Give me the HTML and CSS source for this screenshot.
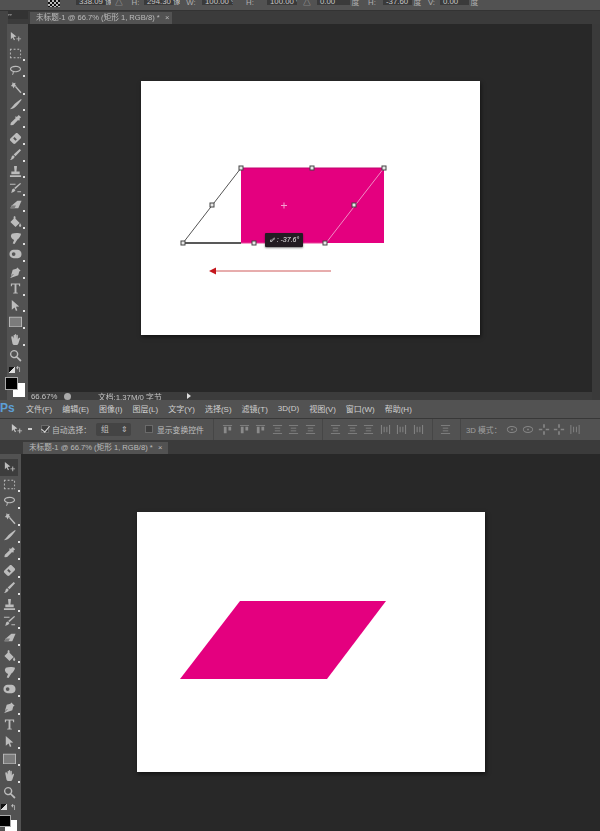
FILE: index.html
```html
<!DOCTYPE html>
<html lang="zh-CN">
<head>
  <meta charset="UTF-8">
  <title>Photoshop 斜切</title>
  <link rel="stylesheet" href="styles.css">
</head>
<body>
  <!-- 图标 -->
  <svg class="defs" width="0" height="0">
    <symbol id="i-move" viewBox="0 0 14 14"><path d="M2 1l6 5-3 .4 1.5 3-1.2.6L3.800 7 2 9z"/><path d="M10 6h1v2h2v1h-2v2h-1V9H8V8h2z"/></symbol>
    <symbol id="i-marquee" viewBox="0 0 14 14"><path d="M1 2h2v1H2v1H1zM5 2h2v1H5zM9 2h2v1H9zM12 3h1v2h-1zM12 7h1v2h-1zM1 6h1v2H1zM1 10h1v1h1v1H1zM5 11h2v1H5zM9 11h2v1H9zM12 11h1v1h-1z"/></symbol>
    <symbol id="i-lasso" viewBox="0 0 14 14"><path d="M7 2c3.500 0 6 1.400 6 3.400S10 9 7 9c-.7 0-1.400-.1-2-.2.300.8-.1 2-.9 3l-.8-.5c.5-.7.8-1.400.7-2.900C2 7.800 1 6.800 1 5.500 1 3.400 3.500 2 7 2zm0 1.300c-2.500 0-4.700.9-4.700 2.200S4.500 7.800 7 7.800s4.700-1 4.700-2.400S9.500 3.300 7 3.300z"/></symbol>
    <symbol id="i-wand" viewBox="0 0 14 14"><path d="M4 1l1 1.500L7 2l-.4 2L8 5.300 6 6 5 8 4 6 2 5.500 3.300 4z"/><path d="M6.500 6.500l1-1 6 6.500-1.200 1.200z"/></symbol>
    <symbol id="i-blade" viewBox="0 0 14 14"><path d="M13 1l.6.8C11 5 9 8 6.500 10 4.500 11.500 2.500 12 1 12c2-1.500 3-3.500 5-5.500C8 4.500 10.500 3 13 1z"/></symbol>
    <symbol id="i-dropper" viewBox="0 0 14 14"><path d="M10.500 1L13 3.500l-2 2 .8.8-1 1-1-.8-5.300 5.300L2 12l-.5-.3.5-2.200L7.300 4.200 6.500 3.300l1-1 .9.800z"/></symbol>
    <symbol id="i-heal" viewBox="0 0 14 14"><path d="M9.500 1.500l3 3c.7.700.7 1.700 0 2.400l-5.600 5.600c-.7.700-1.700.7-2.400 0l-3-3c-.7-.7-.7-1.700 0-2.400l5.600-5.600c.7-.7 1.700-.7 2.400 0z"/><path fill="#555" d="M6 5.500l2.500 2.500-1.500 1.500L4.500 7z"/></symbol>
    <symbol id="i-brush" viewBox="0 0 14 14"><path d="M11.500 1L13 2.500 7 9 5 7zM4.500 7.800l1.700 1.700C5.500 11.500 3.500 12.800 1 13c1.300-1 1.500-2 1.700-3 .2-1 1-1.900 1.800-2.200z"/></symbol>
    <symbol id="i-stamp" viewBox="0 0 14 14"><path d="M5.500 1h3v1.500L8 7h3.500v3h-9V7H6l-.5-4.500zM1 11h12v2H1z"/></symbol>
    <symbol id="i-history" viewBox="0 0 14 14"><path d="M12 1l1 1L7 7.500 5.500 6.500zM5 7l2 1.600C6 10.500 4 11.500 2 11.500c1-1 1-2 1.200-3C3.500 7.800 4.300 7.200 5 7z"/><path d="M1 2h6v1H1zM9 10h4v1H9z"/></symbol>
    <symbol id="i-eraser" viewBox="0 0 14 14"><path d="M9 2h4.500L10 10H1.500L3 7z"/><path fill="#7c7c7c" d="M3 7h4.500L6 10H1.500z"/></symbol>
    <symbol id="i-bucket" viewBox="0 0 14 14"><path d="M6 1l1 1v2l4.500 4.500L7 13 1.500 7.500 5 4V2zM12 9c.8 1.300 1.200 2 1.200 2.700a1.200 1.200 0 0 1-2.400 0c0-.7.4-1.400 1.200-2.700z"/></symbol>
    <symbol id="i-smudge" viewBox="0 0 14 14"><path d="M3 2c3-1.500 8-1.300 10 0-.5 2.500-2 5-4 6L6 13l-2-.5 1.500-4C3.500 8 2 6 2 4z"/></symbol>
    <symbol id="i-dodge" viewBox="0 0 14 14"><path d="M5 2h4c2.500 0 4.500 2 4.500 4.500S12 11 9.500 11H5C2.500 11 .5 9 .5 6.500S2.500 2 5 2z"/><circle fill="#555" cx="5" cy="6.500" r="2"/></symbol>
    <symbol id="i-pen" viewBox="0 0 14 14"><path d="M9 1.500l3.500 3.500-1.500 1-1 4L3 12.500l-1 .5-.5-.5L5 9l-.5-.5L2 11l2-7 4-1z"/></symbol>
    <symbol id="i-type" viewBox="0 0 14 14"><path d="M2 1.500h10v3h-1l-.5-1.700H8v8.400l1.500.4v.9h-5v-.9l1.500-.4V2.800H3.500L3 4.500H2z"/></symbol>
    <symbol id="i-path" viewBox="0 0 14 14"><path d="M3 1l8 7-3.500.4L9 12l-1.500.8-1.500-3.700L3 11.500z"/></symbol>
    <symbol id="i-rect" viewBox="0 0 14 14"><path fill="#7c7c7c" d="M1 3h12v9H1z"/><path d="M0 2h14v1H0zM0 12h14v1H0zM0 3h1v9H0zM13 3h1v9h-1z"/></symbol>
    <symbol id="i-hand" viewBox="0 0 14 14"><path d="M3 3.500c.5-.3 1 0 1.200.4L5 6V2.500c0-.9 1.300-.9 1.400 0V6V1.800c0-.9 1.400-.9 1.400 0V6l.3-3.500c.1-.9 1.400-.8 1.400.1V7l1-1.500c.6-.8 1.800-.2 1.300.7L10 11.500c-.4.900-1 1.500-2 1.500H6c-1 0-1.800-.6-2.200-1.500L2.500 5c-.2-.7 0-1.200.5-1.500z"/></symbol>
    <symbol id="i-zoom" viewBox="0 0 14 14"><path d="M5.500 1a4.500 4.500 0 0 1 3.600 7.200l4.400 4-1.300 1.400-4.200-4.300A4.500 4.500 0 1 1 5.500 1zm0 1.500a3 3 0 1 0 0 6 3 3 0 0 0 0-6z"/></symbol>
    <symbol id="i-align" viewBox="0 0 12 12"><path d="M1 1h10v1H1zM2 3h3v7H2zM7 3h3v4H7z"/></symbol>
    <symbol id="i-spread" viewBox="0 0 12 12"><path d="M1 1h10v1H1zM1 10h10v1H1zM3 4h6v1H3zM3 7h6v1H3z"/></symbol>
    <symbol id="i-spread-v" viewBox="0 0 12 12"><path d="M1 1h1v10H1zM10 1h1v10h-1zM4 3h1v6H4zM7 3h1v6H7z"/></symbol>
    <symbol id="i-orbit" viewBox="0 0 14 12"><path d="M7 2c3.300 0 6 1.700 6 4s-2.700 4-6 4-6-1.700-6-4 2.700-4 6-4zm0 1C4.200 3 2 4.300 2 6s2.200 3 5 3 5-1.300 5-3-2.200-3-5-3z"/><path d="M6 5h2v2H6z"/></symbol>
    <symbol id="i-cross" viewBox="0 0 14 12"><path d="M6 0h2v4H6zM6 8h2v4H6zM1 5h4v2H1zM9 5h4v2H9z"/></symbol>
  </svg>

  <!-- 上半部分：斜切中 -->
  <section class="window window-a">
    <div class="topbar">
      <span class="ref-mark"></span>
      <span class="num first">338.09 像素</span>
      <span class="lbl">△</span>
      <span class="lbl">H:</span>
      <span class="num">294.30 像素</span>
      <span class="lbl">W:</span>
      <span class="num">100.00 %</span>
      <span class="lbl">H:</span>
      <span class="num">100.00 %</span>
      <span class="lbl">△</span>
      <span class="num">0.00</span>
      <span class="lbl">度</span>
      <span class="lbl">H:</span>
      <span class="num">-37.60</span>
      <span class="lbl">度</span>
      <span class="lbl">V:</span>
      <span class="num">0.00</span>
      <span class="lbl">度</span>
    </div>
    <div class="tabstrip">
      <div class="grip"><span class="grip-cap">‣‣</span></div>
      <div class="tab">未标题-1 @ 66.7% (矩形 1, RGB/8) * <span class="tab-x">×</span></div>
    </div>
    <div class="workspace">
      <div class="toolbar">
        <div class="tool-group">
          <div class="tool"><svg><use href="#i-move"/></svg></div>
          <div class="tool more"><svg><use href="#i-marquee"/></svg></div>
          <div class="tool more"><svg><use href="#i-lasso"/></svg></div>
        </div>
        <div class="tool-group">
          <div class="tool more"><svg><use href="#i-wand"/></svg></div>
          <div class="tool more"><svg><use href="#i-blade"/></svg></div>
          <div class="tool more"><svg><use href="#i-dropper"/></svg></div>
        </div>
        <div class="tool-group">
          <div class="tool more"><svg><use href="#i-heal"/></svg></div>
          <div class="tool more"><svg><use href="#i-brush"/></svg></div>
          <div class="tool more"><svg><use href="#i-stamp"/></svg></div>
        </div>
        <div class="tool-group">
          <div class="tool more"><svg><use href="#i-history"/></svg></div>
          <div class="tool more"><svg><use href="#i-eraser"/></svg></div>
          <div class="tool more"><svg><use href="#i-bucket"/></svg></div>
          <div class="tool more"><svg><use href="#i-smudge"/></svg></div>
          <div class="tool more"><svg><use href="#i-dodge"/></svg></div>
        </div>
        <div class="tool-group">
          <div class="tool more"><svg><use href="#i-pen"/></svg></div>
          <div class="tool more"><svg><use href="#i-type"/></svg></div>
          <div class="tool more"><svg><use href="#i-path"/></svg></div>
          <div class="tool more"><svg><use href="#i-rect"/></svg></div>
        </div>
        <div class="tool-group">
          <div class="tool more"><svg><use href="#i-hand"/></svg></div>
          <div class="tool"><svg><use href="#i-zoom"/></svg></div>
        </div>
        <div class="swatches">
          <div class="swatch-swap"><span class="mini"></span><span class="swap">↰</span></div>
          <div class="fg"></div>
          <div class="bg"></div>
        </div>
      </div>
      <div class="stage">
        <div class="canvas-area">
          <div class="doc">
            <svg class="art" width="339" height="254">
              <rect x="100" y="87" width="143" height="75" fill="#e4007f"/>
              <path d="M100 87H243" stroke="#c0046f" fill="none"/>
              <path d="M100 87L42 162" stroke="#555" fill="none"/>
              <path d="M42 162H100" stroke="#222" stroke-width="1.500" fill="none"/>
              <path d="M100 162H185" stroke="#e8409a" fill="none"/>
              <path d="M185 162L243 87" stroke="#f08cc4" fill="none"/>
              <g class="handles">
                <rect x="98" y="85" width="4" height="4"/>
                <rect x="169" y="85" width="4" height="4"/>
                <rect x="241" y="85" width="4" height="4"/>
                <rect x="211" y="122" width="4" height="4"/>
                <rect x="182" y="160" width="4" height="4"/>
                <rect x="111" y="160" width="4" height="4"/>
                <rect x="40" y="160" width="4" height="4"/>
                <rect x="69" y="122" width="4" height="4"/>
              </g>
              <path d="M143 121.500v6M140 124.500h6" stroke="#f4a0d0" fill="none"/>
              <path d="M74 190H190" stroke="#cf5a5a" fill="none"/>
              <path d="M68 190l7-3.500v7z" fill="#c4161c"/>
            </svg>
            <div class="angle-tip">⇙ : -37.6°</div>
          </div>
        </div>
        <div class="statusbar">
          <span class="zoom-val">66.67%</span>
          <span class="status-ico"></span>
          <span class="doc-size">文档:1.37M/0 字节</span>
          <span class="status-arrow"></span>
        </div>
      </div>
      <div class="scroll-col"></div>
    </div>
  </section>

  <!-- 下半部分：完成后 -->
  <section class="window window-b">
    <div class="menubar">
      <span class="ps-logo">Ps</span>
      <span>文件(F)</span>
      <span>编辑(E)</span>
      <span>图像(I)</span>
      <span>图层(L)</span>
      <span>文字(Y)</span>
      <span>选择(S)</span>
      <span>滤镜(T)</span>
      <span>3D(D)</span>
      <span>视图(V)</span>
      <span>窗口(W)</span>
      <span>帮助(H)</span>
    </div>
    <div class="optbar">
      <svg class="opt-move"><use href="#i-move"/></svg>
      <span class="opt-caret"></span>
      <span class="check on"></span>
      <span class="opt-text auto-label">自动选择：</span>
      <span class="select">组<i>⇕</i></span>
      <span class="check"></span>
      <span class="opt-text show-label">显示变换控件</span>
      <span class="opt-sep sep-a"></span>
      <div class="opt-icons">
        <svg><use href="#i-align"/></svg>
        <svg><use href="#i-align"/></svg>
        <svg><use href="#i-align"/></svg>
        <svg><use href="#i-spread"/></svg>
        <svg><use href="#i-spread"/></svg>
        <svg><use href="#i-spread"/></svg>
      </div>
      <span class="opt-sep sep-b"></span>
      <div class="opt-icons">
        <svg><use href="#i-spread"/></svg>
        <svg><use href="#i-spread"/></svg>
        <svg><use href="#i-spread"/></svg>
        <svg><use href="#i-spread-v"/></svg>
        <svg><use href="#i-spread-v"/></svg>
        <svg><use href="#i-spread-v"/></svg>
      </div>
      <span class="opt-sep sep-c"></span>
      <svg class="opt-one"><use href="#i-spread"/></svg>
      <span class="opt-sep sep-d"></span>
      <span class="opt-3d">3D 模式：</span>
      <div class="opt-icons wide">
        <svg><use href="#i-orbit"/></svg>
        <svg><use href="#i-orbit"/></svg>
        <svg><use href="#i-cross"/></svg>
        <svg><use href="#i-cross"/></svg>
        <svg><use href="#i-spread-v"/></svg>
      </div>
    </div>
    <div class="tabstrip">
      <div class="grip"></div>
      <div class="tab">未标题-1 @ 66.7% (矩形 1, RGB/8) * <span class="tab-x">×</span></div>
    </div>
    <div class="workspace">
      <div class="toolbar">
        <div class="tool-group">
          <div class="tool active"><svg><use href="#i-move"/></svg></div>
          <div class="tool more"><svg><use href="#i-marquee"/></svg></div>
          <div class="tool more"><svg><use href="#i-lasso"/></svg></div>
        </div>
        <div class="tool-group">
          <div class="tool more"><svg><use href="#i-wand"/></svg></div>
          <div class="tool more"><svg><use href="#i-blade"/></svg></div>
          <div class="tool more"><svg><use href="#i-dropper"/></svg></div>
        </div>
        <div class="tool-group">
          <div class="tool more"><svg><use href="#i-heal"/></svg></div>
          <div class="tool more"><svg><use href="#i-brush"/></svg></div>
          <div class="tool more"><svg><use href="#i-stamp"/></svg></div>
        </div>
        <div class="tool-group">
          <div class="tool more"><svg><use href="#i-history"/></svg></div>
          <div class="tool more"><svg><use href="#i-eraser"/></svg></div>
          <div class="tool more"><svg><use href="#i-bucket"/></svg></div>
          <div class="tool more"><svg><use href="#i-smudge"/></svg></div>
          <div class="tool more"><svg><use href="#i-dodge"/></svg></div>
        </div>
        <div class="tool-group">
          <div class="tool more"><svg><use href="#i-pen"/></svg></div>
          <div class="tool more"><svg><use href="#i-type"/></svg></div>
          <div class="tool more"><svg><use href="#i-path"/></svg></div>
          <div class="tool more"><svg><use href="#i-rect"/></svg></div>
        </div>
        <div class="tool-group">
          <div class="tool more"><svg><use href="#i-hand"/></svg></div>
          <div class="tool"><svg><use href="#i-zoom"/></svg></div>
        </div>
        <div class="swatches">
          <div class="swatch-swap"><span class="mini"></span><span class="swap">↰</span></div>
          <div class="fg"></div>
          <div class="bg"></div>
        </div>
      </div>
      <div class="stage">
        <div class="canvas-area">
          <div class="doc">
            <svg class="art" width="348" height="260">
              <path d="M103 89H249L190 167H43z" fill="#e4007f"/>
            </svg>
          </div>
        </div>
      </div>
    </div>
  </section>
</body>
</html>
```

FILE: styles.css
```css
/* 整体页面 */
* {
  box-sizing: border-box;
}

html, body {
  margin: 0;
  padding: 0;
  height: 831px;
  overflow: hidden;
  background: #282828;
}

body {
  font-family: "Liberation Sans", "Noto Sans CJK SC", sans-serif;
  font-size: 7.800px;
  color: #c4c4c4;
}

.defs {
  display: block;
  height: 0;
}

.window {
  display: flex;
  flex-direction: column;
  filter: blur(0.5px);
  overflow: hidden;
}

.window-a {
  height: 400px;
}

.window-b {
  height: 431px;
}

/* 上面被截掉的选项栏 */
.topbar {
  flex: none;
  height: 11px;
  background: #525252;
  border-bottom: 1px solid #333;
  display: grid;
  grid-template-columns: 48px 12px 16px 35px 16px 17px 36px 22px 31px 34px 30px 20px 33px 11px 22px 29px 11px 17px 29px 11px;
  overflow: hidden;
}

.ref-mark {
  grid-column: 2;
  height: 7px;
  background: repeating-conic-gradient(#111 0 25%, #bbb 0 50%) 0 0 / 4px 4px;
}

.topbar .lbl {
  height: 10px;
  line-height: 5px;
  color: #b0b0b0;
  text-align: center;
  overflow: hidden;
}

.num {
  height: 5px;
  background: #3a3a3a;
  color: #c8c8c8;
  line-height: 3px;
  padding-left: 3px;
  white-space: nowrap;
  overflow: hidden;
}

.num.first {
  grid-column: 4;
}

/* 文档标签 */
.tabstrip {
  flex: none;
  background: #3b3b3b;
  display: flex;
  align-items: flex-end;
}

.window-a .tabstrip {
  height: 13px;
}

.window-b .tabstrip {
  height: 14px;
}

.grip {
  align-self: stretch;
  flex: none;
}

.window-a .grip {
  width: 30px;
  border-left: 8px solid #444;
}

.window-b .grip {
  width: 23px;
}

.grip-cap {
  display: block;
  width: 20px;
  height: 8px;
  line-height: 8px;
  font-size: 6px;
  color: #bbb;
  background: #333;
}

.tab {
  height: 12px;
  line-height: 12px;
  padding: 0 4px 0 6px;
  background: #525252;
  color: #bcbcbc;
  font-size: 7.600px;
  white-space: nowrap;
}

.tab-x {
  margin-left: 3px;
}

.window-a .tab {
  width: 142px;
}

.window-b .tab {
  width: 145px;
}

/* 工作区 */
.workspace {
  flex: 1;
  display: flex;
  min-height: 0;
}

.toolbar {
  flex: none;
  background: #525252;
  display: flex;
  flex-direction: column;
}

.window-a .toolbar {
  width: 28px;
  padding: 4.750px 5px 0 1px;
  border-left: 7px solid #444;
}

.window-b .toolbar {
  width: 21px;
  padding: 4.500px 3px 0 0;
}

.tool-group {
  margin-bottom: 1px;
}

.window-b .tool-group {
  margin-bottom: 0.600px;
}

.tool {
  position: relative;
  height: 16.500px;
  display: flex;
  align-items: center;
  justify-content: center;
}

.window-b .tool {
  height: 17px;
}

.tool svg {
  width: 13px;
  height: 13px;
  flex: none;
  fill: #bcbcbc;
}

.tool.active {
  background: #3d3d3d;
}

.tool.more::after {
  content: "";
  position: absolute;
  right: -2px;
  bottom: 1px;
  width: 2px;
  height: 2px;
  background: #e0e0e0;
}

/* 前景色背景色 */
.swatches {
  position: relative;
  flex: 1;
}

.swatch-swap {
  display: flex;
  align-items: center;
  justify-content: space-between;
  height: 10px;
  padding: 0 1px;
}

.mini {
  width: 6px;
  height: 6px;
  background: linear-gradient(135deg, #111 50%, #ddd 50%);
}

.swap {
  font-size: 8px;
  color: #ccc;
}

.fg {
  position: absolute;
  z-index: 1;
  border: 1px solid #aaa;
  background: #000;
}

.bg {
  position: absolute;
  background: #fff;
}

.window-a .fg {
  left: -3px;
  top: 12px;
  width: 13px;
  height: 13px;
}

.window-a .bg {
  left: 5px;
  top: 18px;
  width: 12px;
  height: 14px;
}

.window-b .fg {
  left: -1px;
  top: 13px;
  width: 12px;
  height: 12px;
}

.window-b .bg {
  left: 5px;
  top: 18px;
  width: 12px;
  height: 12px;
}

.stage {
  flex: 1;
  display: flex;
  flex-direction: column;
  min-width: 0;
}

.canvas-area {
  flex: 1;
  background: #282828;
  min-height: 0;
}

.doc {
  position: relative;
  background: #fff;
  box-shadow: 1px 2px 4px rgba(0, 0, 0, 0.55);
}

.window-a .doc {
  width: 339px;
  height: 254px;
  margin: 57px 0 0 113px;
}

.window-b .doc {
  width: 348px;
  height: 260px;
  margin: 58px 0 0 116px;
}

.art {
  display: block;
}

.handles rect {
  fill: #e8e8e8;
  stroke: #444;
}

.angle-tip {
  position: absolute;
  left: 124px;
  top: 152px;
  width: 38px;
  height: 14px;
  line-height: 14px;
  background: #231c22;
  color: #eee;
  font-size: 7px;
  font-style: italic;
  text-align: center;
  border-radius: 1px;
  box-shadow: 0 1px 2px rgba(0, 0, 0, 0.5);
  white-space: nowrap;
}

/* 状态栏 */
.statusbar {
  flex: none;
  height: 8px;
  background: #3c3c3c;
  display: flex;
  align-items: center;
  padding-left: 3px;
  color: #c4c4c4;
}

.zoom-val {
  width: 33px;
}

.status-ico {
  width: 7px;
  height: 7px;
  border-radius: 50%;
  background: #aaa;
}

.doc-size {
  margin-left: 27px;
  width: 89px;
  white-space: nowrap;
}

.status-arrow {
  width: 0;
  height: 0;
  border-left: 4px solid #ddd;
  border-top: 3px solid transparent;
  border-bottom: 3px solid transparent;
}

.scroll-col {
  flex: none;
  width: 8px;
  background: #3a3a3a;
}

/* 菜单栏 */
.menubar {
  flex: none;
  height: 18px;
  padding-bottom: 2px;
  background: #525252;
  display: flex;
  align-items: center;
  gap: 10px;
  font-size: 8px;
  color: #cfcfcf;
  white-space: nowrap;
}

.ps-logo {
  width: 16px;
  font-size: 12px;
  font-weight: bold;
  color: #5d9fd6;
}

/* 选项栏 */
.optbar {
  flex: none;
  height: 22px;
  padding: 0 0 1px 10px;
  background: #525252;
  border-top: 1px solid #383838;
  display: flex;
  align-items: center;
  color: #c0c0c0;
  white-space: nowrap;
}

.opt-move {
  width: 13px;
  height: 13px;
  flex: none;
  fill: #c6c6c6;
}

.opt-caret {
  width: 4px;
  height: 1.500px;
  margin: 0 8px 0 5px;
  background: #ccc;
}

.check {
  position: relative;
  width: 8px;
  height: 8px;
  flex: none;
  background: #3e3e3e;
  border: 1px solid #6a6a6a;
  margin-left: 1px;
}

.check.on::after {
  content: "";
  position: absolute;
  left: 1px;
  top: -2px;
  width: 4px;
  height: 7px;
  border: solid #ddd;
  border-width: 0 1px 1px 0;
  transform: rotate(40deg);
}

.opt-text {
  margin-left: 3px;
}

.auto-label {
  width: 44px;
  flex: none;
}

.show-label {
  width: 47px;
  flex: none;
  margin-left: 4px;
}

.select {
  width: 35px;
  height: 13px;
  line-height: 13px;
  flex: none;
  margin-right: 13px;
  padding-left: 5px;
  background: #444;
  border-radius: 2px;
  display: flex;
  justify-content: space-between;
}

.select i {
  font-style: normal;
  margin-right: 3px;
}

.opt-sep {
  width: 1px;
  height: 21px;
  flex: none;
  background: #464646;
}

.sep-a {
  margin: 0 8px 0 9px;
}

.sep-b {
  margin: 0 7px 0 6px;
}

.sep-c {
  margin: 0 7px 0 8px;
}

.sep-d {
  margin: 0 5px 0 9px;
}

.opt-icons {
  display: flex;
  gap: 5.600px;
}

.opt-icons svg, .opt-one {
  width: 11px;
  height: 11px;
  flex: none;
  fill: #8a8a8a;
}

.opt-icons.wide {
  gap: 3.800px;
  margin-left: 8px;
}

.opt-icons.wide svg {
  width: 12px;
  fill: #858585;
}

.opt-3d {
  width: 32px;
  flex: none;
  color: #a0a0a0;
}
```
